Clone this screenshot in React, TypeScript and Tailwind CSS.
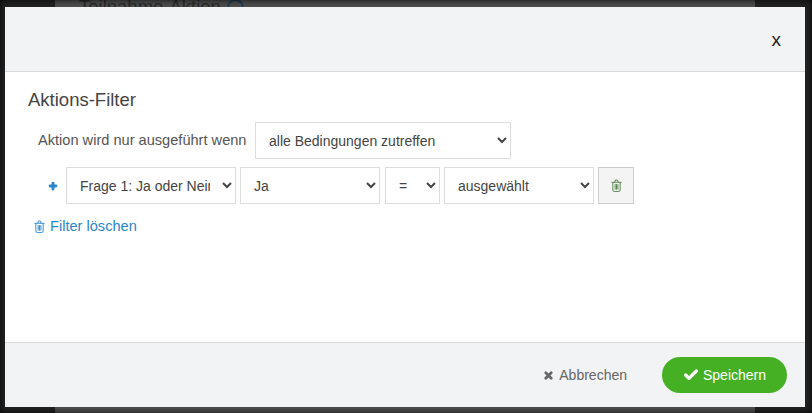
import { Check, Plus, X } from "lucide-react";

const selectClass =
  "h-[37px] border border-[#dcdcdc] bg-white pl-[9px] pr-[9px] text-[14px] text-[#444444] outline-none";

function TrashIcon({ className }: { className: string }) {
  return (
    <svg viewBox="0 0 12 14" className={className} fill="none" stroke="currentColor" strokeWidth="1">
      <path d="M0.5 3.5h11M2 3.5v8.5a1.5 1.5 0 0 0 1.5 1.5h5a1.5 1.5 0 0 0 1.5-1.5V3.5" />
      <path d="M4 3.5l1-2.5h2l1 2.5M4.5 5.5v6M6 5.5v6M7.5 5.5v6" />
    </svg>
  );
}

export default function App() {
  return (
    <div
      className="relative h-[413px] w-[812px] overflow-hidden bg-[#222222] pl-[5px] pt-[7px]"
      style={{ fontFamily: "'Liberation Sans', Arial, sans-serif" }}
    >
      {/* page behind the dialog */}
      <div className="absolute bottom-0 left-[55px] top-0 w-[700px] bg-[#4f4f4f]" />
      <div className="absolute left-[79px] top-[-3px] flex items-center gap-[6px] text-[18.5px] leading-[20px] text-[#2a2a2a]">
        Teilnahme-Aktion
        <span className="h-[17px] w-[17px] rounded-full border-2 border-[#1d3f5a]" />
      </div>
      <div className="absolute inset-0 shadow-[inset_0_0_7px_rgba(0,0,0,0.85)]" />

      <div className="relative flex h-[400px] w-[800px] flex-col bg-white">
        <div className="flex h-[65px] items-center justify-end border-b border-[#d9d9d9] bg-[#f2f3f5] pr-[24px]">
          <span className="text-[19px] leading-none text-[#222222]">x</span>
        </div>

        <div className="flex-1 pl-[23px] pt-[18px]">
          <h2 className="text-[18.5px] font-normal leading-[20px] text-[#444444]">Aktions-Filter</h2>

          <div className="mt-[12px] flex items-center pl-[10px]">
            <span className="w-[217px] text-[14.6px] text-[#555555]">Aktion wird nur ausgeführt wenn</span>
            <select className={`${selectClass} w-[256px]`} defaultValue="alle">
              <option value="alle">alle Bedingungen zutreffen</option>
            </select>
          </div>

          <div className="mt-[8px] flex items-center">
            <Plus className="ml-[20px] mr-[8px] h-[10px] w-[10px] text-[#2a86c7]" strokeWidth={7} />
            <div className="flex items-center gap-1">
              <select className={`${selectClass} w-[170px]`} defaultValue="frage">
                <option value="frage">Frage 1: Ja oder Nein</option>
              </select>
              <select className={`${selectClass} mr-px w-[140px]`} defaultValue="ja">
                <option value="ja">Ja</option>
              </select>
              <select className={`${selectClass} w-[55px]`} defaultValue="gleich">
                <option value="gleich">=</option>
              </select>
              <select className={`${selectClass} w-[150px]`} defaultValue="aus">
                <option value="aus">ausgewählt</option>
              </select>
              <button className="flex h-[37px] w-[36px] items-center justify-center border border-[#cccccc] bg-[#f4f4f4] text-[#4f7f45]">
                <TrashIcon className="h-[13px] w-[11px]" />
              </button>
            </div>
          </div>

          <a className="ml-[6px] mt-[14px] flex items-center gap-[5px] text-[14.6px] leading-[16px] text-[#2a86c7]">
            <TrashIcon className="h-[13px] w-[11px]" />
            Filter löschen
          </a>
        </div>

        <div className="flex h-[65px] items-center justify-end border-t border-[#d9d9d9] bg-[#f2f3f5] pr-[18px]">
          <button className="mr-[35px] flex items-center gap-[5px] text-[14px] text-[#666666]">
            <X className="h-[11px] w-[11px]" strokeWidth={6} />
            Abbrechen
          </button>
          <button className="flex h-[36px] w-[125px] items-center justify-center gap-[4px] rounded-[18px] bg-[#46b025] text-[14px] text-white">
            <Check className="h-[16px] w-[16px]" strokeWidth={5} />
            Speichern
          </button>
        </div>
      </div>
    </div>
  );
}
